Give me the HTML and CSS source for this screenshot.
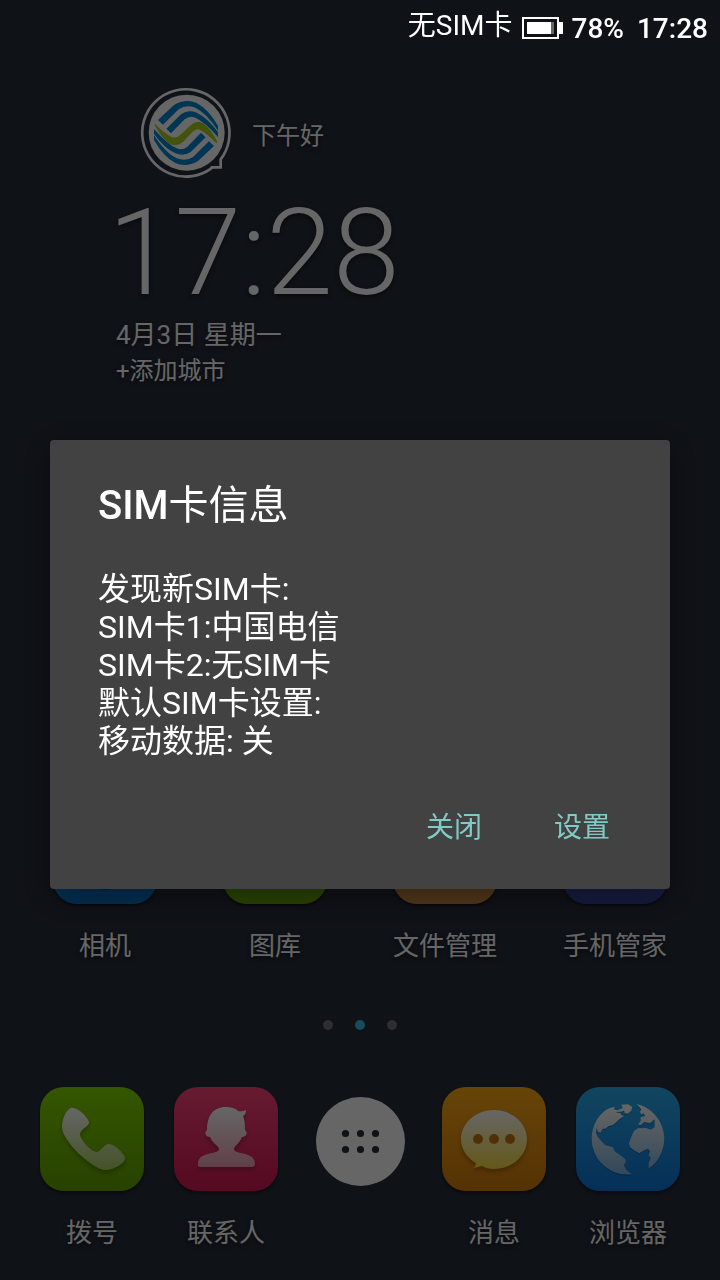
FILE: index.html
```
<!DOCTYPE html>
<html lang="zh-CN">
<head>
    <meta charset="UTF-8">
    <meta name="viewport" content="width=device-width, initial-scale=1.0">
    <title>SIM卡信息</title>
    <link rel="stylesheet" href="styles.css">
</head>
<body>
    <header class="status-bar">
        <span class="carrier">无SIM卡</span>
        <svg class="battery" viewBox="0 0 41 22" aria-hidden="true">
            <rect x="1" y="1" width="35" height="20" fill="none" stroke="#fff" stroke-width="2"/>
            <rect x="5" y="5" width="24" height="12" fill="#fff"/>
            <rect x="29" y="5" width="3" height="12" fill="#666"/>
            <rect x="37" y="5" width="4" height="12" fill="#fff"/>
        </svg>
        <span class="battery-level">78%</span>
        <span class="status-time">17:28</span>
    </header>

    <main class="home">
        <!-- Clock widget -->
        <section class="clock-widget">
            <div class="greeting">
                <svg class="avatar" viewBox="0 0 294 294" aria-hidden="true">
                    <path d="M248 226 V250 H221 L219 254 A131 131 0 1 1 248 226Z" fill="none" stroke="#fff" stroke-width="8"/>
                    <circle cx="146" cy="146" r="114" fill="#fff"/>
                    <g fill="#0085d0">
                        <g id="waves">
                            <path d="M60 108 L108 63 Q143 42 176 57 Q212 76 240 126 V140 Q207 88 172 71 Q144 60 122 76 L75 122Z"/>
                            <path d="M85 134 L130 90 Q150 76 176 86 Q210 102 240 145 V159 Q200 113 172 101 Q154 94 140 106 L99 148Z"/>
                        </g>
                        <use href="#waves" transform="rotate(180 144 147)"/>
                    </g>
                    <path d="M50 119 Q70 140 96 157 Q114 167 130 150 L158 124 Q176 106 196 118 Q218 136 238 173 L235 178 Q210 151 187 138 Q175 131 164 143 L136 173 Q115 192 92 177 Q69 160 50 124Z" fill="#a8cf20"/>
                </svg>
                <span>下午好</span>
            </div>
            <time class="clock">17:28</time>
            <div class="date">4月3日 星期一</div>
            <button class="add-city" type="button">+添加城市</button>
        </section>

        <!-- Apps on the current page -->
        <nav class="app-row">
            <a class="app" href="#camera">
                <svg class="icon camera" viewBox="0 0 104 104" aria-hidden="true">
                    <circle cx="52" cy="54" r="36" fill="#06538f"/>
                    <circle cx="52" cy="50" r="34" fill="#fff"/>
                    <circle cx="52" cy="50" r="22" fill="#26415c"/>
                </svg>
                <span>相机</span>
            </a>
            <a class="app" href="#gallery">
                <svg class="icon gallery" viewBox="0 0 104 104" aria-hidden="true">
                    <rect x="20" y="28" width="64" height="48" rx="5" fill="#fff"/>
                    <path d="M26 70 L44 46 L56 60 L64 52 L78 70Z" fill="#69a800"/>
                </svg>
                <span>图库</span>
            </a>
            <a class="app" href="#files">
                <svg class="icon files" viewBox="0 0 104 104" aria-hidden="true">
                    <path d="M20 28 H44 L50 36 H84 V76 H20Z" fill="#fff"/>
                </svg>
                <span>文件管理</span>
            </a>
            <a class="app" href="#manager">
                <svg class="icon manager" viewBox="0 0 104 104" aria-hidden="true">
                    <path d="M52 18 L80 28 V50 Q78 70 52 82 Q26 70 24 50 V28Z" fill="#fff"/>
                </svg>
                <span>手机管家</span>
            </a>
        </nav>

        <div class="pager">
            <i></i>
            <i class="active"></i>
            <i></i>
        </div>

        <!-- Dock -->
        <nav class="dock">
            <a class="app" href="#dial">
                <svg class="icon dial" viewBox="0 0 104 104" aria-hidden="true">
                    <defs>
                        <linearGradient id="dial-fade" x2="0" y2="1">
                            <stop offset="0" stop-color="#fff"/>
                            <stop offset="1" stop-color="#a8d062"/>
                        </linearGradient>
                    </defs>
                    <path class="glyph" d="M22 40 C22 32 26 23 31 21 C36 19 47 29 49 35 C50 39 39 43 40 48 C41 53 49 63 56 65 C60 66 64 57 69 57 C74 57 84 66 85 71 C85 77 73 83 65 83 C54 83 22 55 22 40Z" fill="url(#dial-fade)"/>
                </svg>
                <span>拨号</span>
            </a>
            <a class="app" href="#contacts">
                <svg class="icon contacts" viewBox="0 0 104 104" aria-hidden="true">
                    <defs>
                        <linearGradient id="contact-fade" x2="0" y2="1">
                            <stop offset="0" stop-color="#fff"/>
                            <stop offset="1" stop-color="#f0a0b4"/>
                        </linearGradient>
                    </defs>
                    <path class="glyph" d="M52 20 C57 20 61 21 64 24 Q68 25 72 23 Q72 27 69 29 C71 34 71 38 71 43 C74 45 73 50 68 50 C66 56 60 59 60 62 C60 68 80 64 81 76 Q81 80 78 80 H26 Q23 80 24 76 C25 64 45 68 45 62 C45 59 38 56 36 50 C31 50 30 45 33 43 C33 29 39 20 52 20Z" fill="url(#contact-fade)"/>
                </svg>
                <span>联系人</span>
            </a>
            <a class="app" href="#all" aria-label="全部应用">
                <svg class="icon" viewBox="0 0 104 104" aria-hidden="true">
                    <circle cx="52.5" cy="54.5" r="44.5" fill="#fff"/>
                    <g fill="#262d3a">
                        <circle cx="37.5" cy="46.5" r="3.6"/>
                        <circle cx="52.5" cy="46.5" r="3.6"/>
                        <circle cx="67.5" cy="46.5" r="3.6"/>
                        <circle cx="37.5" cy="62.5" r="3.6"/>
                        <circle cx="52.5" cy="62.5" r="3.6"/>
                        <circle cx="67.5" cy="62.5" r="3.6"/>
                    </g>
                </svg>
            </a>
            <a class="app" href="#messages">
                <svg class="icon messages" viewBox="0 0 104 104" aria-hidden="true">
                    <defs>
                        <linearGradient id="message-fade" x2="0" y2="1">
                            <stop offset="0" stop-color="#fff"/>
                            <stop offset="1" stop-color="#fbdc3c"/>
                        </linearGradient>
                    </defs>
                    <path class="glyph" d="M52 23 C70 23 85 36 85 52 C85 69 70 82 52 82 Q45 82 40 79 Q36 80 31 81 Q34 79 34 76 C25 71 19 62 19 52 C19 36 34 23 52 23Z" fill="url(#message-fade)"/>
                    <g fill="#c87c10">
                        <circle cx="36" cy="52" r="5"/>
                        <circle cx="52" cy="52" r="5"/>
                        <circle cx="68" cy="52" r="5"/>
                    </g>
                </svg>
                <span>消息</span>
            </a>
            <a class="app" href="#browser">
                <svg class="icon browser" viewBox="0 0 312 312" aria-hidden="true">
                    <defs>
                        <linearGradient id="globe-fade" gradientUnits="userSpaceOnUse" x1="0" y1="20" x2="0" y2="230">
                            <stop offset="0" stop-color="#fff"/>
                            <stop offset="1" stop-color="#7db4de"/>
                        </linearGradient>
                    </defs>
                    <g class="glyph" transform="translate(38 33)" fill="url(#globe-fade)">
                        <path d="M50 37 L64 30 L79 26 L75 34 L86 37 L84 44 L94 44 L98 51 L106 54 L92 64 L80 75 L72 82 L60 84 L50 92 L42 92 L36 104 L28 102 L24 90 L22 106 L28 118 L38 130 L50 142 L60 144 L72 148 L80 162 L96 172 L110 184 L112 192 L106 202 L112 215 L130 229 A108 108 0 0 1 50 37Z"/>
                        <path d="M98 20 L118 19 L131 27 L128 38 L118 47 L108 46 L106 38 L98 41 L76 42 L82 38 L94 34 L102 30Z"/>
                        <path d="M144 18 A108 108 0 0 1 180 212 L180 196 L186 180 L180 172 L184 160 L178 152 L164 158 L152 166 L138 158 L124 148 L121 136 L128 116 L136 98 L148 91 L172 90 L186 95 L198 88 L198 64 L184 76 L166 72 L158 80 L148 82 L156 68 L156 58 L170 54 L164 46 L158 50 L154 42 L158 34Z"/>
                    </g>
                </svg>
                <span>浏览器</span>
            </a>
        </nav>
    </main>

    <!-- SIM dialog over the dimmed home screen -->
    <div class="scrim">
        <div class="dialog" role="dialog" aria-modal="true" aria-labelledby="dialog-title">
            <h1 class="dialog-title" id="dialog-title"><b>SIM</b>卡信息</h1>
            <p class="dialog-text">
                发现新SIM卡:<br>
                SIM卡1:中国电信<br>
                SIM卡2:无SIM卡<br>
                默认SIM卡设置:<br>
                移动数据: 关
            </p>
            <div class="dialog-actions">
                <button type="button">关闭</button>
                <button type="button">设置</button>
            </div>
        </div>
    </div>
</body>
</html>
```
FILE: styles.css
```
* {
    box-sizing: border-box;
}

body {
    margin: 0;
    min-height: 100vh;
    display: flex;
    flex-direction: column;
    font-family: Roboto, "Noto Sans CJK SC", sans-serif;
    color: #fff;
    background: #262d3a;
}

button {
    border: 0;
    padding: 0;
    background: none;
    font-family: inherit;
    cursor: pointer;
}

.status-bar {
    position: relative;
    z-index: 2;
    height: 50px;
    padding: 0 12px;
    display: flex;
    justify-content: flex-end;
    align-items: center;
    font-size: 28px;
    line-height: 34px;
}

.carrier {
    margin-right: 9px;
    padding-top: 2px;
}

.battery {
    width: 41px;
    height: 22px;
    margin: 6px 9px 0 0;
}

.battery-level,
.status-time {
    padding-top: 8px;
    font-weight: 500;
}

.battery-level {
    margin-right: 13px;
}

.home {
    flex: 1;
    display: flex;
    flex-direction: column;
    padding: 34px 20px 30px;
}

.clock-widget {
    display: flex;
    flex-direction: column;
    align-items: flex-start;
    padding-left: 96px;
    text-shadow: 0 2px 4px rgba(0, 0, 0, 0.5);
}

.greeting {
    display: flex;
    align-items: center;
    gap: 16px;
    margin-left: 22px;
    font-size: 24px;
}

.avatar {
    width: 98px;
    height: 98px;
}

.clock {
    margin: 11px 0 0 -8px;
    font-size: 120px;
    font-weight: 300;
    line-height: 120px;
}

.date {
    margin-top: 4px;
    font-size: 26px;
    line-height: 36px;
}

.add-city {
    color: inherit;
    font-size: 24px;
    line-height: 36px;
    text-shadow: inherit;
}

.app-row,
.dock {
    display: grid;
    grid-template-columns: repeat(4, 1fr);
}

.app-row {
    margin-top: auto;
}

.dock {
    grid-template-columns: repeat(5, 1fr);
    padding: 0 5px;
}

.app {
    display: flex;
    flex-direction: column;
    align-items: center;
    gap: 25px;
    color: inherit;
    font-size: 26px;
    line-height: 34px;
    text-decoration: none;
    text-shadow: 0 2px 4px rgba(0, 0, 0, 0.6);
}

.icon {
    width: 104px;
    height: 104px;
    border-radius: 24px;
}

.icon[class*=" "] {
    box-shadow: 0 2px 3px rgba(0, 0, 0, 0.5);
}

.glyph {
    filter: drop-shadow(0 3px 2px rgba(0, 0, 0, 0.25));
}

.camera { background: linear-gradient(#2dafee, #0a73cd); }
.gallery { background: linear-gradient(#85d700, #69a800); }
.files { background: linear-gradient(#f0b060, #cb8a41); }
.manager { background: linear-gradient(#5868d0, #37449e); }
.dial { background: linear-gradient(#85d700, #62a500); }
.contacts { background: linear-gradient(#ff447b, #d51955); }
.messages { background: linear-gradient(#ffac14, #d57d0c); }
.browser { background: linear-gradient(#2dafee, #0d76dc); }

.pager {
    display: flex;
    justify-content: center;
    gap: 22px;
    margin: 57px 0;
}

.pager i {
    width: 10px;
    height: 10px;
    border-radius: 50%;
    background: #71747c;
}

.pager .active {
    background: #40b8e8;
}

.scrim {
    position: fixed;
    inset: 0;
    z-index: 1;
    display: flex;
    align-items: center;
    justify-content: center;
    padding: 49px 50px 0;
    background: rgba(0, 0, 0, 0.6);
}

.dialog {
    width: 100%;
    max-width: 720px;
    padding: 42px 24px 28px 48px;
    border-radius: 4px;
    background: #424242;
    box-shadow: 0 8px 30px rgba(0, 0, 0, 0.4);
}

.dialog-title {
    margin: 0;
    font-size: 40px;
    font-weight: 400;
    line-height: 48px;
}

.dialog-title b {
    font-weight: 500;
}

.dialog-text {
    margin: 40px 0 29px;
    font-size: 32px;
    line-height: 38px;
}

.dialog-actions {
    display: flex;
    justify-content: flex-end;
}

.dialog-actions button {
    min-width: 128px;
    height: 72px;
    color: #80cbc4;
    font-size: 28px;
}
```
